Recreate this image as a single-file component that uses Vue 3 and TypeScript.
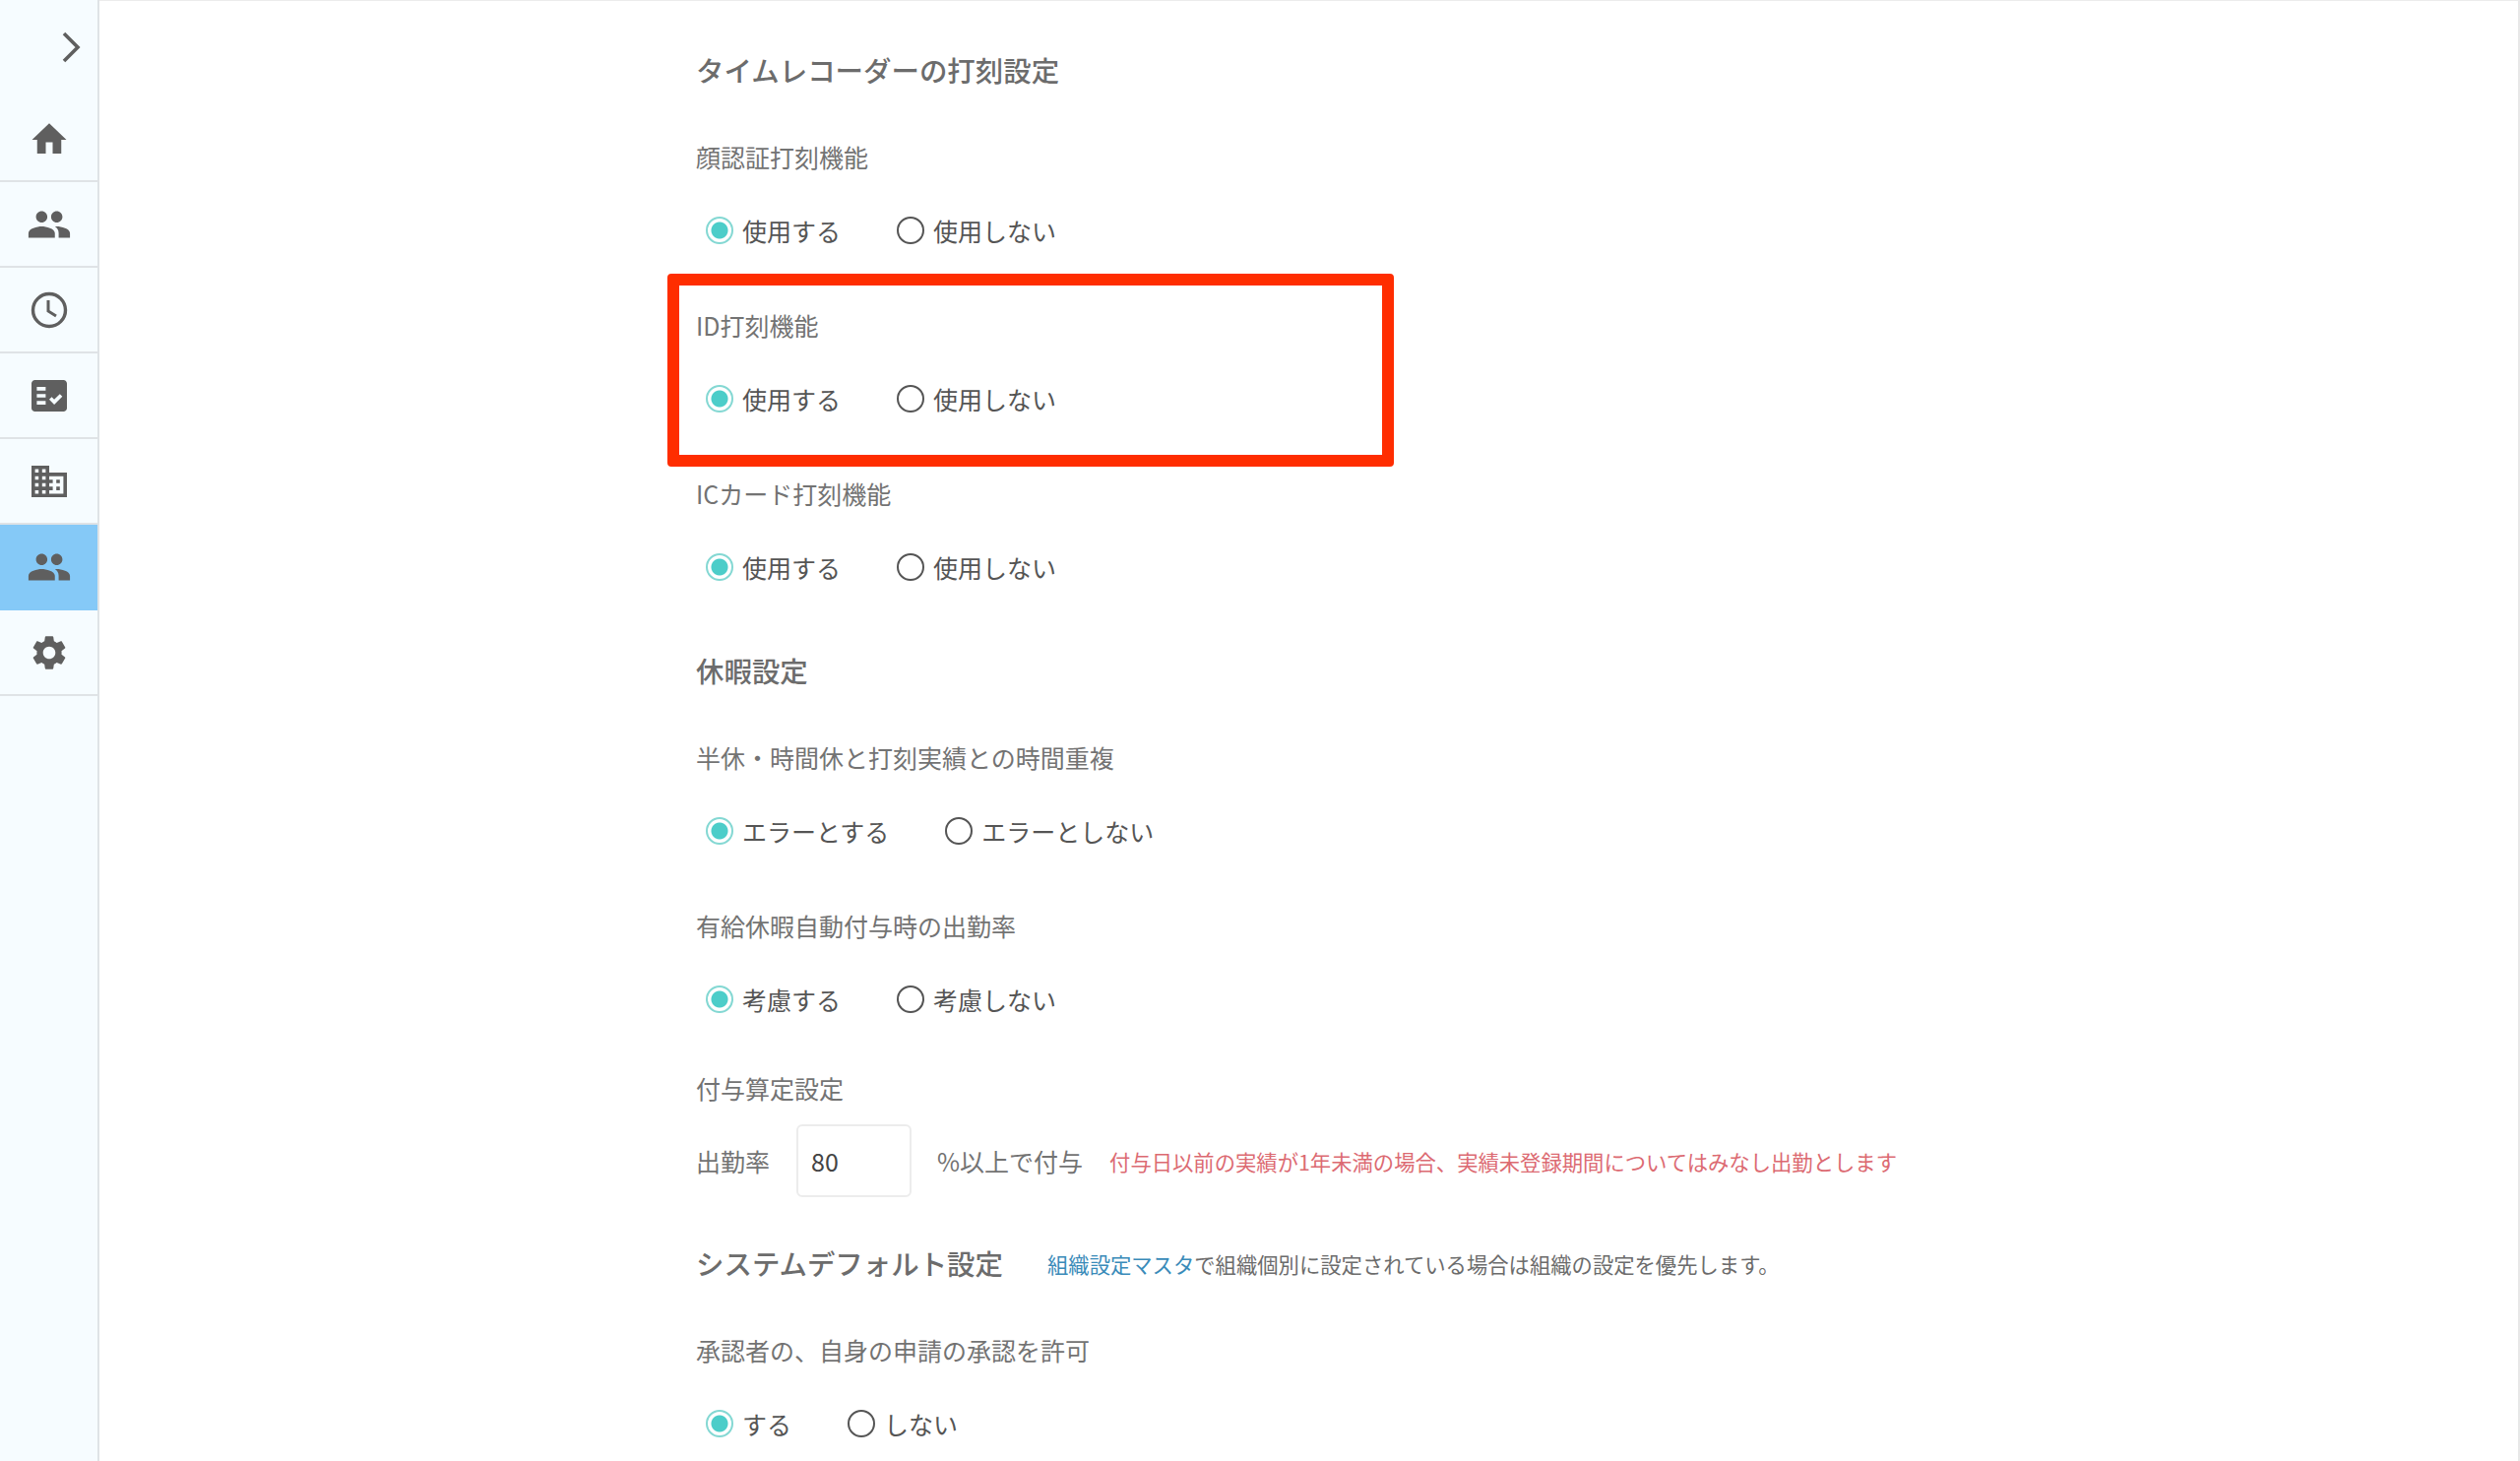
<script setup lang="ts">
type Opt = { label: string; on?: boolean }
type Group = { label: string; options: Opt[] }

const use: Opt[] = [{ label: '使用する', on: true }, { label: '使用しない' }]

const stampGroups: Group[] = [
  { label: '顔認証打刻機能', options: use },
  { label: 'ID打刻機能', options: use },
  { label: 'ICカード打刻機能', options: use },
]

const leaveGroups: Group[] = [
  { label: '半休・時間休と打刻実績との時間重複', options: [{ label: 'エラーとする', on: true }, { label: 'エラーとしない' }] },
  { label: '有給休暇自動付与時の出勤率', options: [{ label: '考慮する', on: true }, { label: '考慮しない' }] },
]

const sideItems = ['home', 'people', 'clock', 'task', 'building', 'people', 'gear']
</script>

<template>
  <div class="page">
    <aside class="side">
      <div class="side-top">
        <svg width="24" height="34" viewBox="0 0 24 34" class="chev">
          <path d="M5 3 L19 17 L5 31" fill="none" stroke="#5f5f5f" stroke-width="3.6" />
        </svg>
      </div>
      <div v-for="(item, i) in sideItems" :key="i" class="side-item" :class="{ active: i === 5 }">
        <svg v-if="item === 'home'" width="42" height="42" viewBox="0 0 24 24"><path d="M10 20.5v-6.5h4v6.5h5v-8h3L12 3 2 12.500h3v8z" fill="#5f5f5f" /></svg>
        <svg v-else-if="item === 'people'" width="46" height="46" viewBox="0 0 24 24"><path d="M16 11c1.660 0 3-1.340 3-3s-1.340-3-3-3-3 1.340-3 3 1.340 3 3 3zm-8 0c1.660 0 3-1.340 3-3S9.660 5 8 5 5 6.340 5 8s1.340 3 3 3zm0 2c-2.330 0-7 1.170-7 3.500V19h14v-2.500C15 14.170 10.330 13 8 13zm8 0c-.290 0-.620.020-.970.050 1.160.840 1.970 1.970 1.970 3.450V19h6v-2.500c0-2.330-4.670-3.500-7-3.500z" fill="#5f5f5f" /></svg>
        <svg v-else-if="item === 'clock'" width="42" height="42" viewBox="0 0 42 42"><circle cx="21" cy="21" r="16.500" fill="none" stroke="#5f5f5f" stroke-width="3.400" /><path d="M20 11v11l8 5" fill="none" stroke="#5f5f5f" stroke-width="3" /></svg>
        <svg v-else-if="item === 'task'" width="36" height="32" viewBox="2 3 20 18" preserveAspectRatio="none"><path fill="#5f5f5f" d="M20 3H4c-1.100 0-2 .9-2 2v14c0 1.100.9 2 2 2h16c1.100 0 2-.9 2-2V5c0-1.100-.9-2-2-2zM10 17H5v-2h5v2zm0-4H5v-2h5v2zm0-4H5V7h5v2zm4.820 8L12 14.160l1.410-1.410 1.410 1.420L17.990 11l1.420 1.420L14.820 17z" /></svg>
        <svg v-else-if="item === 'building'" width="36" height="32" viewBox="2 3 20 18" preserveAspectRatio="none"><path fill="#5f5f5f" d="M12 7V3H2v18h20V7H12zM6 19H4v-2h2v2zm0-4H4v-2h2v2zm0-4H4V9h2v2zm0-4H4V5h2v2zm4 12H8v-2h2v2zm0-4H8v-2h2v2zm0-4H8V9h2v2zm0-4H8V5h2v2zm10 12h-8v-2h2v-2h-2v-2h2v-2h-2V9h8v10zm-2-8h-2v2h2v-2zm0 4h-2v2h2v-2z" /></svg>
        <svg v-else width="42" height="42" viewBox="0 0 24 24"><path d="M19.140 12.940c.040-.300.060-.610.060-.940 0-.320-.020-.640-.070-.940l2.030-1.580c.180-.140.230-.410.120-.610l-1.920-3.320c-.120-.220-.370-.290-.590-.220l-2.390.960c-.500-.380-1.030-.700-1.620-.940l-.360-2.540c-.040-.240-.240-.410-.480-.410h-3.840c-.240 0-.430.170-.470.410l-.360 2.540c-.590.240-1.130.570-1.620.940l-2.390-.960c-.220-.080-.470 0-.590.220L2.740 8.870c-.120.210-.080.470.120.610l2.030 1.580c-.050.300-.090.630-.090.940s.020.640.070.940l-2.030 1.580c-.180.140-.230.410-.120.610l1.920 3.320c.120.220.370.290.590.220l2.390-.960c.500.380 1.030.700 1.620.940l.360 2.540c.050.240.240.410.480.410h3.840c.240 0 .440-.170.470-.410l.360-2.540c.590-.240 1.130-.560 1.620-.940l2.390.960c.220.080.470 0 .590-.220l1.920-3.320c.120-.220.070-.470-.120-.610l-2.010-1.580zM12 15.600c-1.980 0-3.600-1.620-3.600-3.600s1.620-3.600 3.600-3.600 3.600 1.620 3.600 3.600-1.620 3.600-3.600 3.600z" fill="#5f5f5f" /></svg>
      </div>
    </aside>

    <main class="main">
      <h2 class="title first">タイムレコーダーの打刻設定</h2>
      <section v-for="g in stampGroups" :key="g.label" class="group">
        <div class="label">{{ g.label }}</div>
        <div class="radios">
          <label v-for="o in g.options" :key="o.label" class="radio">
            <span class="mark" :class="{ on: o.on }"></span>{{ o.label }}
          </label>
        </div>
      </section>

      <h2 class="title leave">休暇設定</h2>
      <section v-for="g in leaveGroups" :key="g.label" class="group">
        <div class="label">{{ g.label }}</div>
        <div class="radios">
          <label v-for="o in g.options" :key="o.label" class="radio">
            <span class="mark" :class="{ on: o.on }"></span>{{ o.label }}
          </label>
        </div>
      </section>

      <div class="label calc">付与算定設定</div>
      <div class="rate">
        <span>出勤率</span>
        <div class="input">80</div>
        <span>%以上で付与</span>
        <span class="note">付与日以前の実績が1年未満の場合、実績未登録期間についてはみなし出勤とします</span>
      </div>

      <div class="sys">
        <h2 class="title sys-title">システムデフォルト設定</h2>
        <p class="sys-note"><span class="link">組織設定マスタ</span>で組織個別に設定されている場合は組織の設定を優先します。</p>
      </div>
      <section class="group">
        <div class="label">承認者の、自身の申請の承認を許可</div>
        <div class="radios">
          <label class="radio"><span class="mark on"></span>する</label>
          <label class="radio"><span class="mark"></span>しない</label>
        </div>
      </section>

      <div class="callout"></div>
    </main>
  </div>
</template>

<style scoped>
.page {
  display: flex;
  height: 1484px;
  overflow: hidden;
  background: #fff;
  font-family: "Noto Sans CJK JP", "Noto Sans", sans-serif;
  color: #666;
}
.side {
  width: 101px;
  flex: none;
  box-sizing: border-box;
  background: #f6fcff;
  border-right: 2px solid #dfe3e6;
}
.side-top {
  height: 98px;
  display: flex;
  justify-content: flex-end;
  padding: 31px 15px 0 0;
  box-sizing: border-box;
}
.chev {
  display: block;
}
.side-item {
  height: 87px;
  box-sizing: border-box;
  border-bottom: 2px solid #dfe3e6;
  display: flex;
  align-items: center;
  justify-content: center;
}
.side-item.active {
  background: #85c9f7;
  border-bottom-color: #85c9f7;
}
.main {
  position: relative;
  flex: 1;
  padding: 0 0 0 606px;
  border-top: 1px solid #ececec;
  border-right: 2px solid #e8e8e8;
}
.title {
  margin: 0;
  font-size: 28.44px;
  font-weight: 500;
  line-height: 40px;
  color: #6c6c6c;
}
.first {
  margin-top: 50px;
}
.label {
  font-size: 25px;
  line-height: 36px;
  color: #737373;
}
.first + .group {
  margin-top: 50px;
}
.group + .group {
  margin-top: 60px;
}
.radios {
  display: flex;
  gap: 57px;
  margin-top: 39px;
  padding-left: 10px;
}
.radio {
  display: flex;
  align-items: center;
  font-size: 25px;
  line-height: 36px;
  color: #555;
}
.mark {
  width: 28px;
  height: 28px;
  box-sizing: border-box;
  border: 2px solid #555;
  border-radius: 50%;
  margin-right: 9px;
  background: #fff;
}
.mark.on {
  border-color: #84d8d3;
  background: radial-gradient(circle, #4ccdc9 0 8px, #fff 9px);
}
.leave {
  margin-top: 67px;
}
.leave + .group {
  margin-top: 50px;
}
.calc {
  margin-top: 54px;
}
.rate {
  display: flex;
  align-items: center;
  font-size: 25px;
  color: #737373;
  margin-top: 19px;
}
.input {
  width: 117px;
  height: 74px;
  box-sizing: border-box;
  margin: 0 26px 0 27px;
  padding-left: 13px;
  border: 2px solid #ececec;
  border-radius: 6px;
  display: flex;
  align-items: center;
  font-size: 25px;
  color: #444;
}
.note {
  margin-left: 27px;
  font-size: 21.33px;
  color: #dc6a72;
}
.sys {
  display: flex;
  align-items: center;
  margin-top: 47px;
}
.sys-note {
  margin: 0 0 0 45px;
  font-size: 21.33px;
  color: #6c6c6c;
}
.link {
  color: #3a8bb9;
}
.sys + .group {
  margin-top: 50px;
}
.callout {
  position: absolute;
  left: 577px;
  top: 277px;
  width: 738px;
  height: 196px;
  box-sizing: border-box;
  border: 12px solid #ff2d00;
  border-radius: 4px;
}
</style>
